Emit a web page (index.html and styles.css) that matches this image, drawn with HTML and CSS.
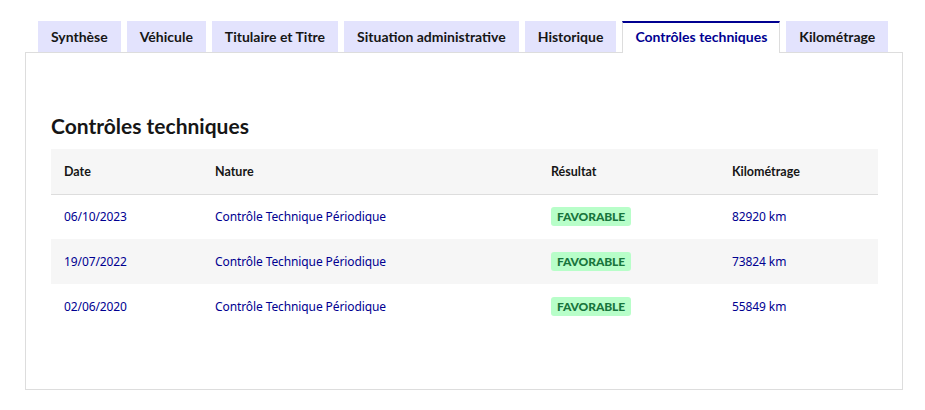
FILE: index.html
```html
<!DOCTYPE html>
<html lang="fr">
<head>
<meta charset="utf-8">
<title>Contrôles techniques</title>
<link rel="stylesheet" href="styles.css">
</head>
<body>
<div class="tabs">
  <ul class="tab-list">
    <li class="tab">Synthèse</li>
    <li class="tab">Véhicule</li>
    <li class="tab">Titulaire et Titre</li>
    <li class="tab">Situation administrative</li>
    <li class="tab">Historique</li>
    <li class="tab active">Contrôles techniques</li>
    <li class="tab">Kilométrage</li>
  </ul>
  <div class="panel">
    <h2 class="title">Contrôles techniques</h2>
    <table class="table">
      <thead>
        <tr><th class="c-date">Date</th><th class="c-nature">Nature</th><th class="c-res">Résultat</th><th>Kilométrage</th></tr>
      </thead>
      <tbody>
        <tr><td>06/10/2023</td><td>Contrôle Technique Périodique</td><td><span class="badge">Favorable</span></td><td>82920 km</td></tr>
        <tr class="alt"><td>19/07/2022</td><td>Contrôle Technique Périodique</td><td><span class="badge">Favorable</span></td><td>73824 km</td></tr>
        <tr><td>02/06/2020</td><td>Contrôle Technique Périodique</td><td><span class="badge">Favorable</span></td><td>55849 km</td></tr>
      </tbody>
    </table>
  </div>
</div>
</body>
</html>
```

FILE: styles.css
```css
* { box-sizing: border-box; }
html, body { margin: 0; padding: 0; background: #fff; }
body {
  font-family: "Noto Sans", "Open Sans", sans-serif;
  color: #161616;
  padding: 21px 22px 0 25px;
}
.tabs { width: 878px; }
.tab-list {
  list-style: none;
  margin: 0;
  padding: 0 0 0 13px;
  display: flex;
  gap: 6px;
  height: 31px;
}
.tab {
  background: #e3e3fd;
  font-family: Lato, "Noto Sans", sans-serif;
  font-weight: 700;
  font-size: 14px;
  line-height: 31px;
  height: 31px;
  padding: 0 13px;
  white-space: nowrap;
}
.tab.active {
  background: #fff;
  color: #000091;
  border-top: 2px solid #000091;
  border-left: 1px solid #ddd;
  border-right: 1px solid #ddd;
  padding: 0 12px;
  line-height: 28px;
  height: 32px;
  position: relative;
  z-index: 1;
}
.panel {
  border: 1px solid #ddd;
  height: 338px;
  padding: 59px 25px 0 25px;
}
.title {
  margin: 0 0 9px 0;
  font-family: Lato, "Noto Sans", sans-serif;
  font-size: 21px;
  line-height: 28px;
  font-weight: 700;
}
.table {
  width: 827px;
  border-collapse: collapse;
  font-size: 12px;
}
.table th {
  text-align: left;
  font-family: Lato, "Noto Sans", sans-serif;
  font-weight: 700;
  font-size: 12.5px;
  background: #f6f6f6;
  height: 45px;
  padding: 0 13px;
  border-bottom: 1px solid #ddd;
  color: #161616;
}
.table td {
  height: 45px;
  padding: 0 13px;
  color: #000091;
  letter-spacing: -0.1px;
}
.c-date { width: 151px; }
.c-nature { width: 336px; }
.c-res { width: 181px; }
.table tr.alt td { background: #f6f6f6; }
.badge {
  display: inline-block;
  background: #b8fec9;
  color: #18753c;
  font-family: Lato, "Noto Sans", sans-serif;
  font-weight: 900;
  font-size: 12px;
  text-transform: uppercase;
  line-height: 19px;
  padding: 0 6px;
  border-radius: 3px;
}
```
